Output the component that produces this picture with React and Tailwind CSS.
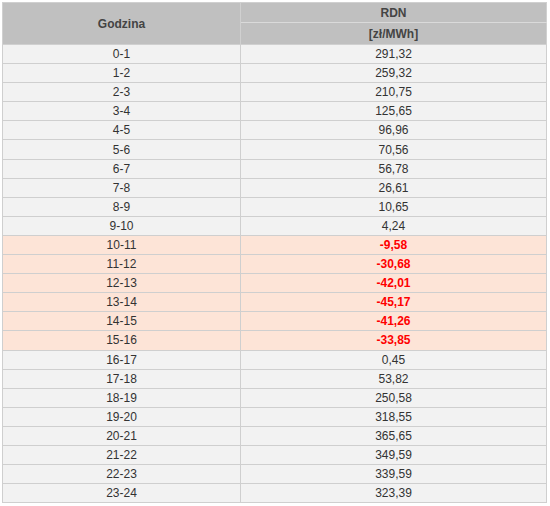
const rows = [
  ["0-1", "291,32"],
  ["1-2", "259,32"],
  ["2-3", "210,75"],
  ["3-4", "125,65"],
  ["4-5", "96,96"],
  ["5-6", "70,56"],
  ["6-7", "56,78"],
  ["7-8", "26,61"],
  ["8-9", "10,65"],
  ["9-10", "4,24"],
  ["10-11", "-9,58"],
  ["11-12", "-30,68"],
  ["12-13", "-42,01"],
  ["13-14", "-45,17"],
  ["14-15", "-41,26"],
  ["15-16", "-33,85"],
  ["16-17", "0,45"],
  ["17-18", "53,82"],
  ["18-19", "250,58"],
  ["19-20", "318,55"],
  ["20-21", "365,65"],
  ["21-22", "349,59"],
  ["22-23", "339,59"],
  ["23-24", "323,39"],
];

export default function App() {
  return (
    <div className="w-[550px] h-[506px] overflow-hidden bg-white pl-[2px] pt-[2px] font-['Liberation_Sans',Arial,sans-serif] text-[12px]">
      <table className="w-[545px] border-collapse table-fixed">
        <colgroup>
          <col className="w-[238px]" />
          <col />
        </colgroup>
        <thead>
          <tr className="h-[20px]">
            <th
              rowSpan={2}
              className="bg-[#c0c0c0] text-[#444] font-bold border border-[#d0d0d0] text-center"
            >
              Godzina
            </th>
            <th className="bg-[#c0c0c0] text-[#444] font-bold border border-[#d0d0d0] border-b-[#dadada] text-center">
              RDN
            </th>
          </tr>
          <tr className="h-[22px]">
            <th className="bg-[#c0c0c0] text-[#444] font-bold border border-[#d0d0d0] border-t-[#dadada] text-center">
              [zł/MWh]
            </th>
          </tr>
        </thead>
        <tbody>
          {rows.map(([h, v]) => {
            const neg = v.startsWith("-");
            const bg = neg ? "bg-[#fde4d7]" : "bg-[#f2f2f2]";
            return (
              <tr key={h} className="h-[19.1px]">
                <td className={`${bg} border border-[#cfcfcf] text-center text-[#333] p-0 leading-[18px]`}>
                  {h}
                </td>
                <td
                  className={`${bg} border border-[#cfcfcf] text-center p-0 leading-[18px] ${
                    neg ? "text-[#ff0000] font-bold" : "text-[#333]"
                  }`}
                >
                  {v}
                </td>
              </tr>
            );
          })}
        </tbody>
      </table>
    </div>
  );
}
